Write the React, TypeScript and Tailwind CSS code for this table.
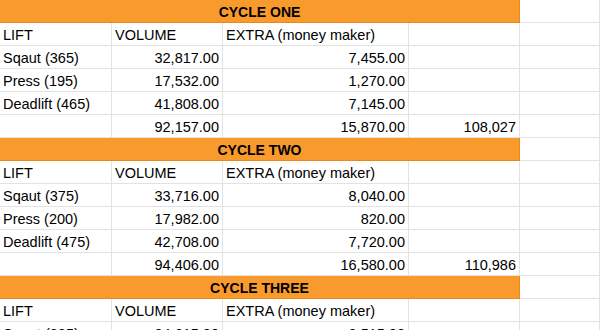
import React from "react"

type Cycle = {
    title: string
    lifts: { name: string; volume: string; extra: string }[]
    totalVolume?: string
    totalExtra?: string
    grand?: string
}

const cycles: Cycle[] = [
    {
        title: "CYCLE ONE",
        lifts: [
            { name: "Sqaut (365)", volume: "32,817.00", extra: "7,455.00" },
            { name: "Press (195)", volume: "17,532.00", extra: "1,270.00" },
            { name: "Deadlift (465)", volume: "41,808.00", extra: "7,145.00" },
        ],
        totalVolume: "92,157.00",
        totalExtra: "15,870.00",
        grand: "108,027",
    },
    {
        title: "CYCLE TWO",
        lifts: [
            { name: "Sqaut (375)", volume: "33,716.00", extra: "8,040.00" },
            { name: "Press (200)", volume: "17,982.00", extra: "820.00" },
            { name: "Deadlift (475)", volume: "42,708.00", extra: "7,720.00" },
        ],
        totalVolume: "94,406.00",
        totalExtra: "16,580.00",
        grand: "110,986",
    },
    {
        title: "CYCLE THREE",
        lifts: [{ name: "Sqaut (385)", volume: "34,615.00", extra: "8,515.00" }],
    },
]

const cell = "h-[23px] border-r border-b border-[#e2e2e2] pt-[2px] leading-[20px] px-[3px] whitespace-nowrap overflow-hidden"

function Row({ a, b, c, d }: { a?: string; b?: string; c?: string; d?: string }) {
    return (
        <>
            <div className={cell}>{a}</div>
            <div className={`${cell} text-right`}>{b}</div>
            <div className={`${cell} text-right`}>{c}</div>
            <div className={`${cell} text-right`}>{d}</div>
            <div className={cell}></div>
        </>
    )
}

export default function App() {
    return (
        <div className="w-[600px] h-[330px] overflow-hidden bg-white text-black text-[14.5px]" style={{ fontFamily: '"Liberation Sans", Arial, sans-serif' }}>
            <div className="grid grid-cols-[112px_111px_186px_111px_1fr]">
                {cycles.map((cy) => (
                    <React.Fragment key={cy.title}>
                        <div className="col-span-4 h-[23px] bg-[#f99a2c] border-r border-b border-[#e58a1f] pt-[2px] leading-[20px] text-center text-[14px] font-bold">
                            {cy.title}
                        </div>
                        <div className={cell}></div>
                        <div className={cell}>LIFT</div>
                        <div className={cell}>VOLUME</div>
                        <div className={cell}>EXTRA (money maker)</div>
                        <div className={cell}></div>
                        <div className={cell}></div>
                        {cy.lifts.map((l) => (
                            <Row key={l.name} a={l.name} b={l.volume} c={l.extra} />
                        ))}
                        {cy.totalVolume && <Row b={cy.totalVolume} c={cy.totalExtra} d={cy.grand} />}
                    </React.Fragment>
                ))}
            </div>
        </div>
    )
}
